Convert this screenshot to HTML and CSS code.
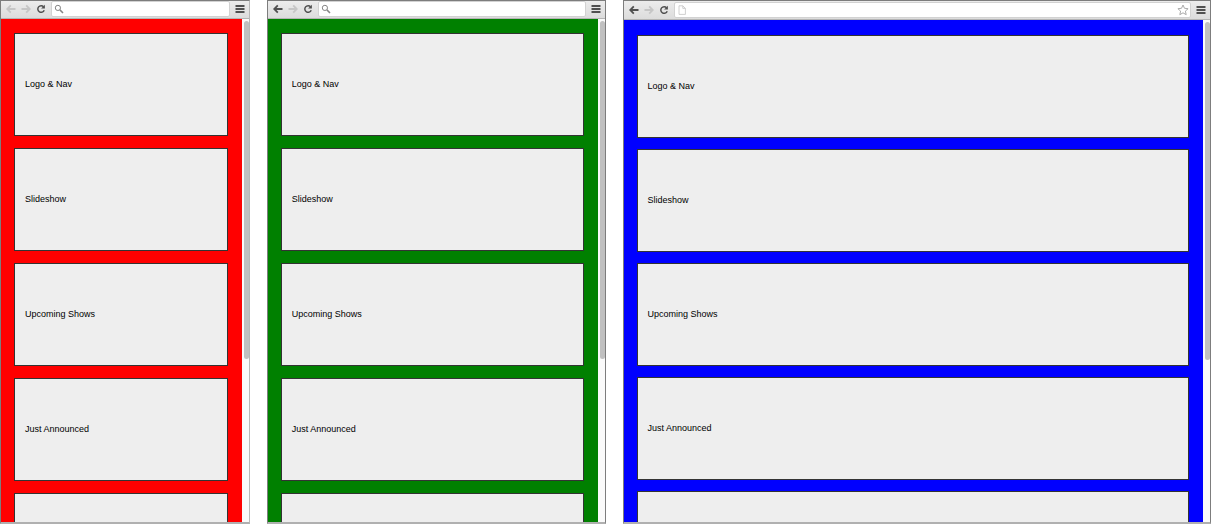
FILE: index.html
```
<!DOCTYPE html>
<html lang="en">
<head>
    <meta charset="UTF-8">
    <meta name="viewport" content="width=device-width, initial-scale=1.0">
    <title>Breakpoints</title>
    <link rel="stylesheet" href="styles.css">
</head>
<body>
    <svg class="sprite" aria-hidden="true">
        <symbol id="back" viewBox="0 0 10 10">
            <path d="M9.5 5H1.5M4.8 1.4L1.2 5L4.8 8.6" fill="none" stroke="currentColor" stroke-width="1.8"/>
        </symbol>
        <symbol id="forward" viewBox="0 0 10 10">
            <path d="M.5 5H8.5M5.2 1.4L8.8 5L5.2 8.6" fill="none" stroke="currentColor" stroke-width="1.8"/>
        </symbol>
        <symbol id="reload" viewBox="0 0 10 10">
            <path d="M7.6 2.8A3.3 3.3 0 1 0 8.2 6.2" fill="none" stroke="currentColor" stroke-width="1.5"/>
            <path d="M8.9 .8V4.6H5.1Z" fill="currentColor"/>
        </symbol>
        <symbol id="menu" viewBox="0 0 10 10">
            <path d="M.5 2H9.5M.5 5H9.5M.5 8H9.5" stroke="currentColor" stroke-width="1.8"/>
        </symbol>
        <symbol id="search" viewBox="0 0 10 10">
            <circle cx="3.9" cy="3.9" r="2.6" fill="none" stroke="currentColor" stroke-width="1"/>
            <path d="M5.9 5.9L9 9" stroke="currentColor" stroke-width="1.5"/>
        </symbol>
        <symbol id="page" viewBox="0 0 10 10">
            <path d="M2 .8H5.8L8.4 3.4V9.4H2ZM5.8 .8V3.4H8.4" fill="none" stroke="currentColor" stroke-width=".8"/>
        </symbol>
        <symbol id="star" viewBox="0 0 12 12">
            <path d="M6 1L7.5 4.3L11.1 4.7L8.4 7.1L9.2 10.7L6 8.8L2.8 10.7L3.6 7.1L.9 4.7L4.5 4.3Z" fill="none" stroke="currentColor" stroke-width="1"/>
        </symbol>
    </svg>

    <main class="browsers">
        <section class="browser small">
            <header class="toolbar">
                <button type="button" aria-label="Back" disabled><svg><use href="#back"/></svg></button>
                <button type="button" aria-label="Forward" disabled><svg><use href="#forward"/></svg></button>
                <button type="button" aria-label="Reload"><svg><use href="#reload"/></svg></button>
                <div class="address">
                    <svg><use href="#search"/></svg>
                    <input type="text" aria-label="Address">
                </div>
                <button type="button" aria-label="Menu"><svg><use href="#menu"/></svg></button>
            </header>
            <div class="viewport">
                <div class="page">
                    <div class="box">Logo &amp; Nav</div>
                    <div class="box">Slideshow</div>
                    <div class="box">Upcoming Shows</div>
                    <div class="box">Just Announced</div>
                    <div class="box"></div>
                </div>
                <div class="track"><div class="thumb"></div></div>
            </div>
        </section>

        <section class="browser medium">
            <header class="toolbar">
                <button type="button" aria-label="Back"><svg><use href="#back"/></svg></button>
                <button type="button" aria-label="Forward" disabled><svg><use href="#forward"/></svg></button>
                <button type="button" aria-label="Reload"><svg><use href="#reload"/></svg></button>
                <div class="address">
                    <svg><use href="#search"/></svg>
                    <input type="text" aria-label="Address">
                </div>
                <button type="button" aria-label="Menu"><svg><use href="#menu"/></svg></button>
            </header>
            <div class="viewport">
                <div class="page">
                    <div class="box">Logo &amp; Nav</div>
                    <div class="box">Slideshow</div>
                    <div class="box">Upcoming Shows</div>
                    <div class="box">Just Announced</div>
                    <div class="box"></div>
                </div>
                <div class="track"><div class="thumb"></div></div>
            </div>
        </section>

        <section class="browser large">
            <header class="toolbar">
                <button type="button" aria-label="Back"><svg><use href="#back"/></svg></button>
                <button type="button" aria-label="Forward" disabled><svg><use href="#forward"/></svg></button>
                <button type="button" aria-label="Reload"><svg><use href="#reload"/></svg></button>
                <div class="address">
                    <svg class="file"><use href="#page"/></svg>
                    <input type="text" aria-label="Address">
                    <svg class="star"><use href="#star"/></svg>
                </div>
                <button type="button" aria-label="Menu"><svg><use href="#menu"/></svg></button>
            </header>
            <div class="viewport">
                <div class="page">
                    <div class="box">Logo &amp; Nav</div>
                    <div class="box">Slideshow</div>
                    <div class="box">Upcoming Shows</div>
                    <div class="box">Just Announced</div>
                    <div class="box"></div>
                </div>
                <div class="track"><div class="thumb"></div></div>
            </div>
        </section>
    </main>
</body>
</html>
```

FILE: styles.css
```
* {
    box-sizing: border-box;
}
body {
    margin: 0;
    background-color: #fff;
    color: #000;
    font-family: "Liberation Sans", Arial, sans-serif;
    font-size: 9px;
}
.sprite {
    display: none;
}
.browsers {
    display: grid;
    grid-template-columns: 250fr 339fr 589fr;
    grid-template-rows: 100%;
    gap: 17px;
    height: 100vh;
    padding-right: 5px;
}

/* browser windows */
.browser {
    display: flex;
    flex-direction: column;
    min-width: 0;
    border: 1px solid #7d7d7d;
    border-bottom: 2px solid #b0b0b0;
    overflow: hidden;
}
.small {
    border-right-color: #b8b8b8;
}

/* toolbar */
.toolbar {
    display: flex;
    align-items: center;
    flex: none;
    gap: 5px;
    height: 18px;
    padding: 0 4px 1px 5px;
    background: linear-gradient(#ececec, #dcdcdc);
    border-bottom: 1px solid #b4b4b4;
}
.large .toolbar {
    height: 19px;
}
.toolbar button {
    flex: none;
    width: 10px;
    height: 10px;
    padding: 0;
    border: none;
    background: none;
    color: #505050;
}
.toolbar button:disabled {
    color: #c6c6c6;
}
.toolbar svg {
    display: block;
    flex: none;
    width: 10px;
    height: 10px;
}
.address {
    display: flex;
    align-items: center;
    flex: 1;
    min-width: 0;
    height: 16px;
    padding: 0 1px 0 2px;
    background-color: #fff;
    border: 1px solid #d2d2d2;
    border-radius: 2px;
    color: #858585;
}
.address input {
    flex: 1;
    min-width: 0;
    height: 12px;
    padding: 0 4px;
    border: none;
    outline: none;
    background: none;
    font: inherit;
}
.address .file {
    color: #c4c4c4;
}
.address .star {
    width: 12px;
    height: 12px;
    color: #aaa;
}

/* page content */
.viewport {
    display: flex;
    flex: 1;
    min-height: 0;
}
.page {
    display: flex;
    flex-direction: column;
    flex: 1;
    gap: 12px;
    min-width: 0;
    padding: 14px 14px 0 13px;
    overflow: hidden;
}
.small .page {
    background-color: #f00;
}
.medium .page {
    background-color: #008000;
}
.large .page {
    gap: 11px;
    padding-top: 15px;
    background-color: #00f;
}
.box {
    display: flex;
    align-items: center;
    flex: none;
    height: 103px;
    padding: 0 10px 2px;
    background-color: #eee;
    border: 1px solid #333;
}
.track {
    flex: none;
    width: 7px;
    padding: 2px 0 0 2px;
    background-color: #fafafa;
}
.thumb {
    width: 5px;
    height: 338px;
    border-radius: 3px;
    background-color: #c0c0c0;
}
```
